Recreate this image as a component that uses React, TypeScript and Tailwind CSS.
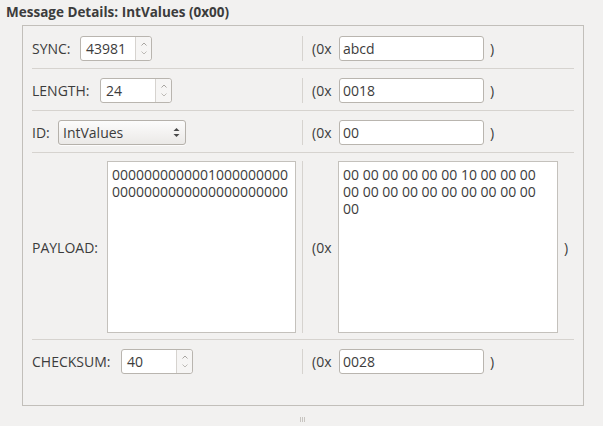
import React from 'react'

const font = { fontFamily: '"Open Sans", "DejaVu Sans", sans-serif' }

function SpinArrows() {
  return (
    <div className="flex h-full w-[16px] flex-col items-center justify-center gap-[5px] rounded-r-[3px] border-l border-[#d6d3cf] bg-[#f6f5f4]">
      <svg width="6" height="4" viewBox="0 0 6 4">
        <path d="M0.5 3.5 L3 1 L5.5 3.5" fill="none" stroke="#a8a5a1" strokeWidth="1" />
      </svg>
      <svg width="6" height="4" viewBox="0 0 6 4">
        <path d="M0.5 0.5 L3 3 L5.5 0.5" fill="none" stroke="#bdbab6" strokeWidth="1" />
      </svg>
    </div>
  )
}

function SpinBox({ value, width }: { value: string; width: string }) {
  return (
    <div className={`flex h-[25px] ${width} items-stretch rounded-[3px] border border-[#b9b5af] bg-white`}>
      <div className="flex flex-1 items-center pl-[5px] text-[#3c3c3c]">{value}</div>
      <SpinArrows />
    </div>
  )
}

function HexField({ value }: { value: string }) {
  return (
    <div className="flex h-[25px] items-center">
      <div className="h-[25px] w-px bg-[#d6d3cf]" />
      <span className="ml-[9px] w-[27px] text-[#3c3c3c]">(0x</span>
      <div className="flex h-[25px] w-[145px] items-center rounded-[3px] border border-[#b9b5af] bg-white pl-[3px] text-[#3c3c3c]">
        {value}
      </div>
      <span className="ml-[6px] text-[#3c3c3c]">)</span>
    </div>
  )
}

function Rule() {
  return <div className="h-px bg-[#d6d3cf]" />
}

export default function App() {
  return (
    <div className="h-[426px] w-[603px] overflow-hidden bg-[#f2f1f0] text-[14px]" style={font}>
      <div className="h-[25px] pl-[6px] pt-[2px] text-[13.5px] font-bold text-[#3c3c3c]">
        Message Details: IntValues (0x00)
      </div>
      <div className="ml-[22px] h-[381px] w-[562px] border border-[#c2bfba] px-[9px]">
        {/* SYNC */}
        <div className="flex h-[42px] items-start pt-[10px]">
          <div className="flex w-[270px] items-start">
            <span className="flex h-[25px] w-[48px] items-center text-[#3c3c3c]">SYNC:</span>
            <SpinBox value="43981" width="w-[72px]" />
          </div>
          <HexField value="abcd" />
        </div>
        <Rule />
        {/* LENGTH */}
        <div className="flex h-[41px] items-start pt-[9px]">
          <div className="flex w-[270px] items-start">
            <span className="flex h-[25px] w-[68px] items-center text-[#3c3c3c]">LENGTH:</span>
            <SpinBox value="24" width="w-[72px]" />
          </div>
          <HexField value="0018" />
        </div>
        <Rule />
        {/* ID */}
        <div className="flex h-[41px] items-start pt-[9px]">
          <div className="flex w-[270px] items-start">
            <span className="flex h-[25px] w-[26px] items-center text-[#3c3c3c]">ID:</span>
            <div className="flex h-[25px] w-[128px] items-center justify-between rounded-[3px] border border-[#b5b1ab] bg-gradient-to-b from-[#fcfcfc] to-[#ebe9e7] pl-[4px] pr-[5px] text-[#3c3c3c] shadow-[0_1px_0_rgba(255,255,255,0.8)]">
              <span>IntValues</span>
              <svg width="7" height="11" viewBox="0 0 7 11">
                <path d="M0.5 4 L3.5 1 L6.5 4 Z" fill="#4a4a4a" />
                <path d="M0.5 7 L3.5 10 L6.5 7 Z" fill="#4a4a4a" />
              </svg>
            </div>
          </div>
          <HexField value="00" />
        </div>
        <Rule />
        {/* PAYLOAD */}
        <div className="flex h-[186px] items-start pt-[8px]">
          <div className="flex h-[172px] w-[270px] items-center">
            <span className="w-[75px] text-[#3c3c3c]">PAYLOAD:</span>
            <div className="h-[172px] w-[189px] whitespace-pre border border-[#c4c1bc] bg-white px-[4px] pt-[4px] leading-[17px] text-[#3c3c3c]">
              {'0000000000001000000000\n0000000000000000000000'}
            </div>
          </div>
          <div className="flex h-[172px] items-center">
            <div className="h-[172px] w-px bg-[#d6d3cf]" />
            <span className="ml-[9px] w-[26px] text-[#3c3c3c]">(0x</span>
            <div className="h-[172px] w-[220px] whitespace-pre border border-[#c4c1bc] bg-white px-[4px] pt-[4px] leading-[17px] text-[#3c3c3c]">
              {'00 00 00 00 00 00 10 00 00 00\n00 00 00 00 00 00 00 00 00 00\n00'}
            </div>
            <span className="ml-[6px] text-[#3c3c3c]">)</span>
          </div>
        </div>
        <Rule />
        {/* CHECKSUM */}
        <div className="flex h-[64px] items-start pt-[9px]">
          <div className="flex w-[270px] items-start">
            <span className="flex h-[25px] w-[89px] items-center text-[#3c3c3c]">CHECKSUM:</span>
            <SpinBox value="40" width="w-[72px]" />
          </div>
          <HexField value="0028" />
        </div>
      </div>
      <div className="flex justify-center pt-[11px]">
        <div className="flex gap-[1px] pl-[2px]">
          <div className="h-[5px] w-px bg-[#c8c5c1]" />
          <div className="h-[5px] w-px bg-[#c8c5c1]" />
          <div className="h-[5px] w-px bg-[#c8c5c1]" />
        </div>
      </div>
    </div>
  )
}
